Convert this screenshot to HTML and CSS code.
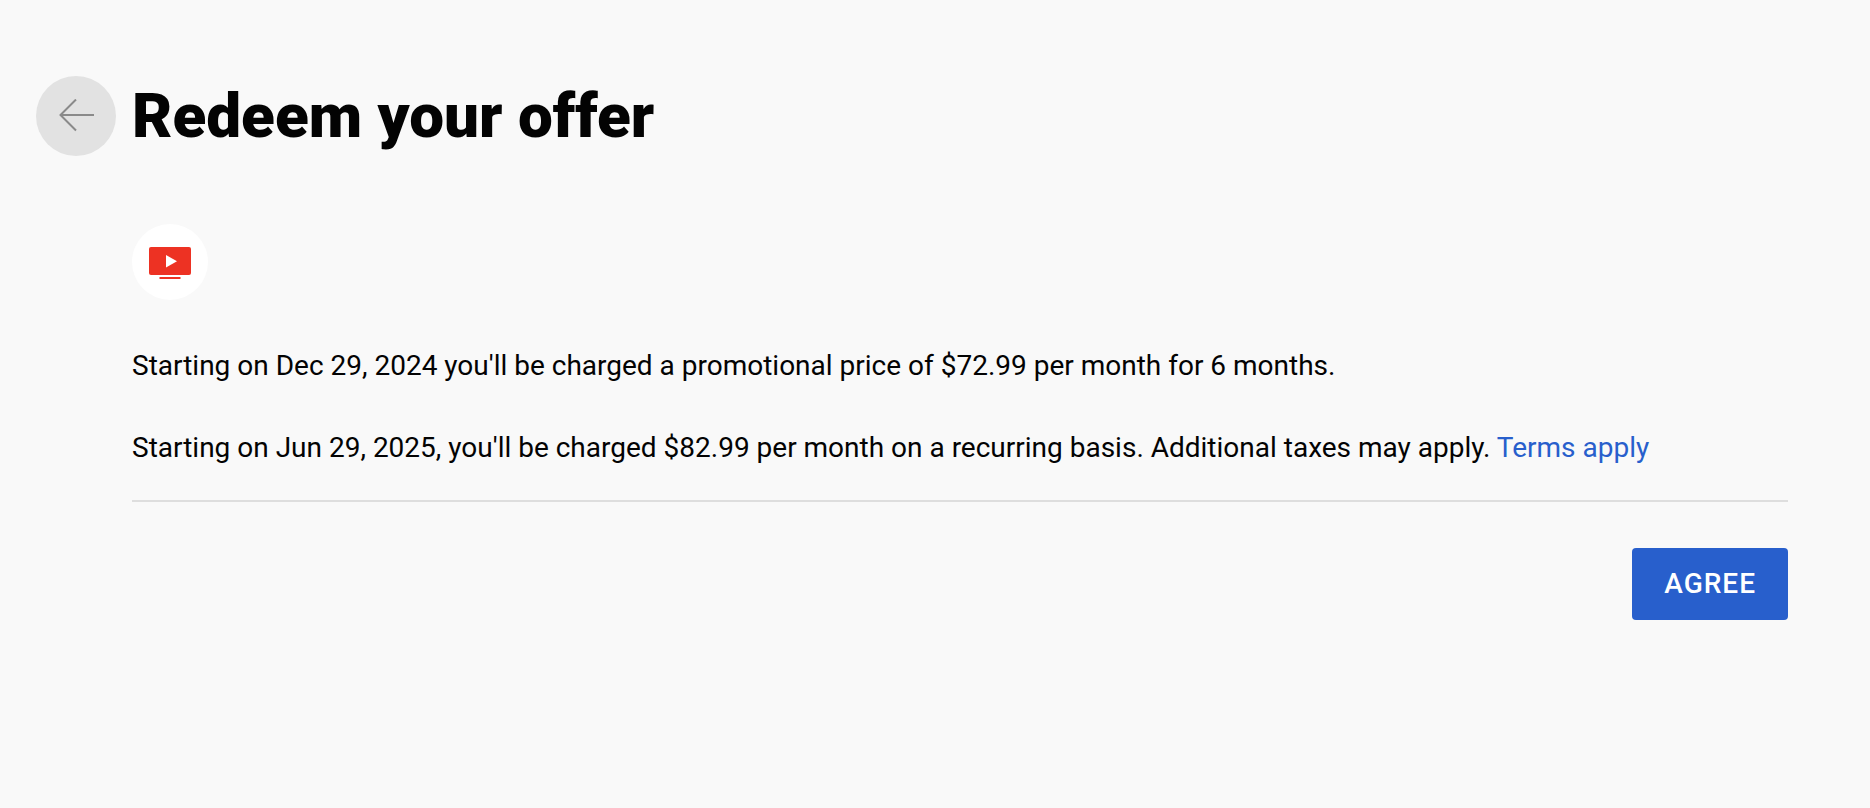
FILE: index.html
```html
<!DOCTYPE html>
<html lang="en">
<head>
<meta charset="utf-8">
<title>Redeem your offer</title>
<link rel="stylesheet" href="styles.css">
</head>
<body>
<main class="page">
  <header class="header">
    <button class="back" type="button" aria-label="Back">
      <svg class="back-icon" viewBox="0 0 36 34" aria-hidden="true"><path d="M18 0.5 2.500 16 18 31.500M2.500 16H36"/></svg>
    </button>
    <h1 class="title">Redeem your offer</h1>
  </header>
  <section class="offer">
    <div class="logo">
      <svg class="logo-icon" viewBox="0 0 42 34" aria-hidden="true">
        <rect y="2" width="42" height="28" rx="2" fill="#ed3223"/>
        <path d="M17 10v12.500l11-6.250z" fill="#fff"/>
        <rect x="10.500" y="32" width="21" height="2" fill="#ed3223"/>
      </svg>
    </div>
    <p class="text">Starting on Dec 29, 2024 you'll be charged a promotional price of $72.99 per month for 6 months.</p>
    <p class="text">Starting on Jun 29, 2025, you'll be charged $82.99 per month on a recurring basis. Additional taxes may apply. <a class="link" href="#terms">Terms apply</a></p>
    <footer class="actions">
      <button class="agree" type="button">AGREE</button>
    </footer>
  </section>
</main>
</body>
</html>
```
FILE: styles.css
```css
body {
  margin: 0;
  background: #f9f9f9;
  color: #030303;
  font-family: Roboto, sans-serif;
}
.page {
  padding: 76px 82px 32px 36px;
}
.header {
  display: flex;
  align-items: center;
  gap: 16px;
}
.back {
  display: grid;
  place-items: center;
  width: 80px;
  height: 80px;
  padding: 0;
  border: 0;
  border-radius: 50%;
  background: #e2e2e2;
}
.back-icon {
  width: 36px;
  height: 34px;
  fill: none;
  stroke: #8a8a8a;
  stroke-width: 2;
}
.title {
  margin: 0;
  font-size: 62px;
  line-height: 80px;
  font-weight: 900;
}
.offer {
  margin-left: 96px;
  padding-top: 68px;
}
.logo {
  display: grid;
  place-items: center;
  width: 76px;
  height: 76px;
  margin-bottom: 46px;
  border-radius: 50%;
  background: #fff;
}
.logo-icon {
  width: 42px;
  height: 34px;
}
.text {
  margin: 0 0 42px;
  font-size: 28px;
  line-height: 40px;
}
.text:last-of-type {
  margin-bottom: 32px;
}
.link {
  color: #285fcc;
  text-decoration: none;
}
.actions {
  display: flex;
  justify-content: flex-end;
  padding-top: 46px;
  border-top: 2px solid #dedede;
}
.agree {
  padding: 16px 32px;
  border: 0;
  border-radius: 4px;
  background: #285fcc;
  color: #fff;
  font: 500 28px/40px Roboto, sans-serif;
  letter-spacing: 1px;
}
```
